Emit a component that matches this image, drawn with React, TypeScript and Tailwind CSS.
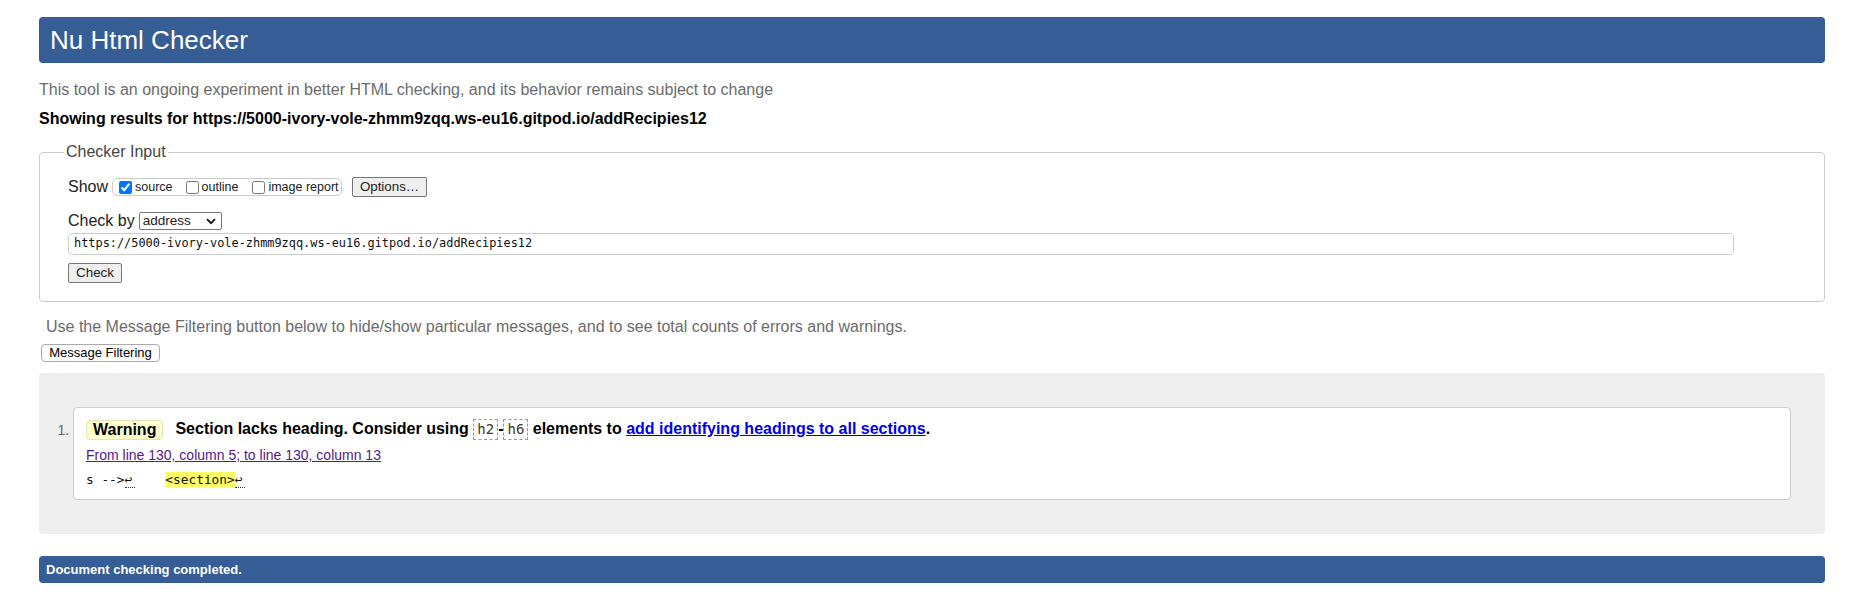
export default function App() {
    return (
        <div className="min-h-screen bg-white pl-[39px] pr-[24px] pt-[17px] font-['Liberation_Sans',Arial,sans-serif] text-[#222]">
            <h1 className="h-[46px] rounded-[4px] bg-[#365d95] pl-[11px] text-[26px] leading-[46px] text-white">Nu Html Checker</h1>
            <p className="mt-[17px] text-[16px] leading-[20px] text-[#6b6b6b]">
                This tool is an ongoing experiment in better HTML checking, and its behavior remains subject to change
            </p>
            <p className="mt-[9px] text-[16px] font-bold leading-[20px] text-black">
                Showing results for https://5000-ivory-vole-zhmm9zqq.ws-eu16.gitpod.io/addRecipies12
            </p>

            <fieldset className="mt-[13px] rounded-[4px] border border-[#ccc] pl-[28px] pb-[17px]">
                <legend className="ml-[-4px] px-[2px] text-[16px] leading-[20px] text-[#444]">Checker Input</legend>
                <div className="mt-[14px] flex h-[22px] items-center">
                    <span className="text-[16px] leading-[20px]">Show</span>
                    <div className="ml-[4px] flex h-[18px] w-[230px] items-center rounded-[5px] border border-[#ccc] pl-[6px] text-[12.5px]">
                        <input type="checkbox" defaultChecked className="m-0 h-[13px] w-[13px]" />
                        <span className="ml-[3px]">source</span>
                        <input type="checkbox" className="m-0 ml-[13px] h-[13px] w-[13px]" />
                        <span className="ml-[3px]">outline</span>
                        <input type="checkbox" className="m-0 ml-[14px] h-[13px] w-[13px]" />
                        <span className="ml-[3px]">image report</span>
                    </div>
                    <button className="ml-[10px] h-[20px] w-[75px] rounded-[2px] border border-[#767676] bg-[#efefef] text-[13.33px] leading-[18px]">
                        Options…
                    </button>
                </div>
                <div className="mt-[13px] flex items-center">
                    <span className="text-[16px] leading-[20px]">Check by</span>
                    <div className="ml-[4px] flex h-[18px] w-[83px] items-center justify-between rounded-[2px] border border-[#767676] bg-white pl-[3px] pr-[5px] text-[13.5px] leading-[16px]">
                        <span>address</span>
                        <svg width="10" height="7" viewBox="0 0 10 7" fill="none" stroke="#111" strokeWidth="1.8">
                            <path d="M1 1.2 5 5.2 9 1.2" />
                        </svg>
                    </div>
                </div>
                <div className="mt-[2px] flex h-[22px] w-[1666px] items-center rounded-[5px] border border-[#ccc] pl-[5px] font-['DejaVu_Sans_Mono',monospace] text-[11.9px] text-[#111]">
                    https://5000-ivory-vole-zhmm9zqq.ws-eu16.gitpod.io/addRecipies12
                </div>
                <button className="mt-[8px] h-[20px] w-[54px] rounded-[2px] border border-[#767676] bg-[#efefef] text-[13.33px] leading-[18px]">
                    Check
                </button>
            </fieldset>

            <p className="mt-[15px] ml-[7px] text-[16px] leading-[20px] text-[#6b6b6b]">
                Use the Message Filtering button below to hide/show particular messages, and to see total counts of errors and warnings.
            </p>
            <button className="mt-[7px] ml-[2px] h-[18px] w-[119px] rounded-[4px] border border-[#aaa] bg-white text-[13px] leading-[16px] text-black">
                Message Filtering
            </button>

            <div className="mt-[9px] rounded-[4px] bg-[#eee] p-[34px]">
                <ol className="list-decimal pl-0 marker:text-[14px] marker:text-[#666]">
                    <li className="h-[93px] rounded-[4px] border border-[#ccc] bg-white pl-[12px] pt-[11px]">
                        <div className="flex items-center text-[16px] font-bold leading-[20px] text-black">
                            <span className="rounded-[4px] border border-[#e2e2b8] bg-[#ffffcc] px-[6px] leading-[18px]">Warning</span>
                            <span className="ml-[12px]">
                                Section lacks heading. Consider using{" "}
                                <code className="inline-block border border-dashed border-[#999] px-[3px] font-['DejaVu_Sans_Mono',monospace] text-[14px] font-normal leading-[19px] text-[#4a3520]">h2</code>
                                -
                                <code className="inline-block border border-dashed border-[#999] px-[3px] font-['DejaVu_Sans_Mono',monospace] text-[14px] font-normal leading-[19px] text-[#4a3520]">h6</code>{" "}
                                elements to{" "}
                                <a href="#" className="text-[#0000ee] underline">add identifying headings to all sections</a>.
                            </span>
                        </div>
                        <p className="mt-[6px] text-[14px] leading-[18px]">
                            <a href="#" className="text-[#551a8b] underline">From line 130, column 5; to line 130, column 13</a>
                        </p>
                        <p className="mt-[8px] whitespace-pre font-['DejaVu_Sans_Mono',monospace] text-[12.8px] leading-[16px] text-[#111]">
                            s --&gt;<span className="inline-block w-[10px] border-b border-dotted border-[#333] leading-[14px]">↩</span>    <span className="bg-[#ffff66]">&lt;section&gt;</span><span className="inline-block w-[10px] border-b border-dotted border-[#333] leading-[14px]">↩</span>
                        </p>
                    </li>
                </ol>
            </div>

            <div className="mt-[22px] h-[27px] rounded-[4px] bg-[#365d95] pl-[7px] text-[13px] font-bold leading-[27px] text-white">
                Document checking completed.
            </div>
        </div>
    );
}
